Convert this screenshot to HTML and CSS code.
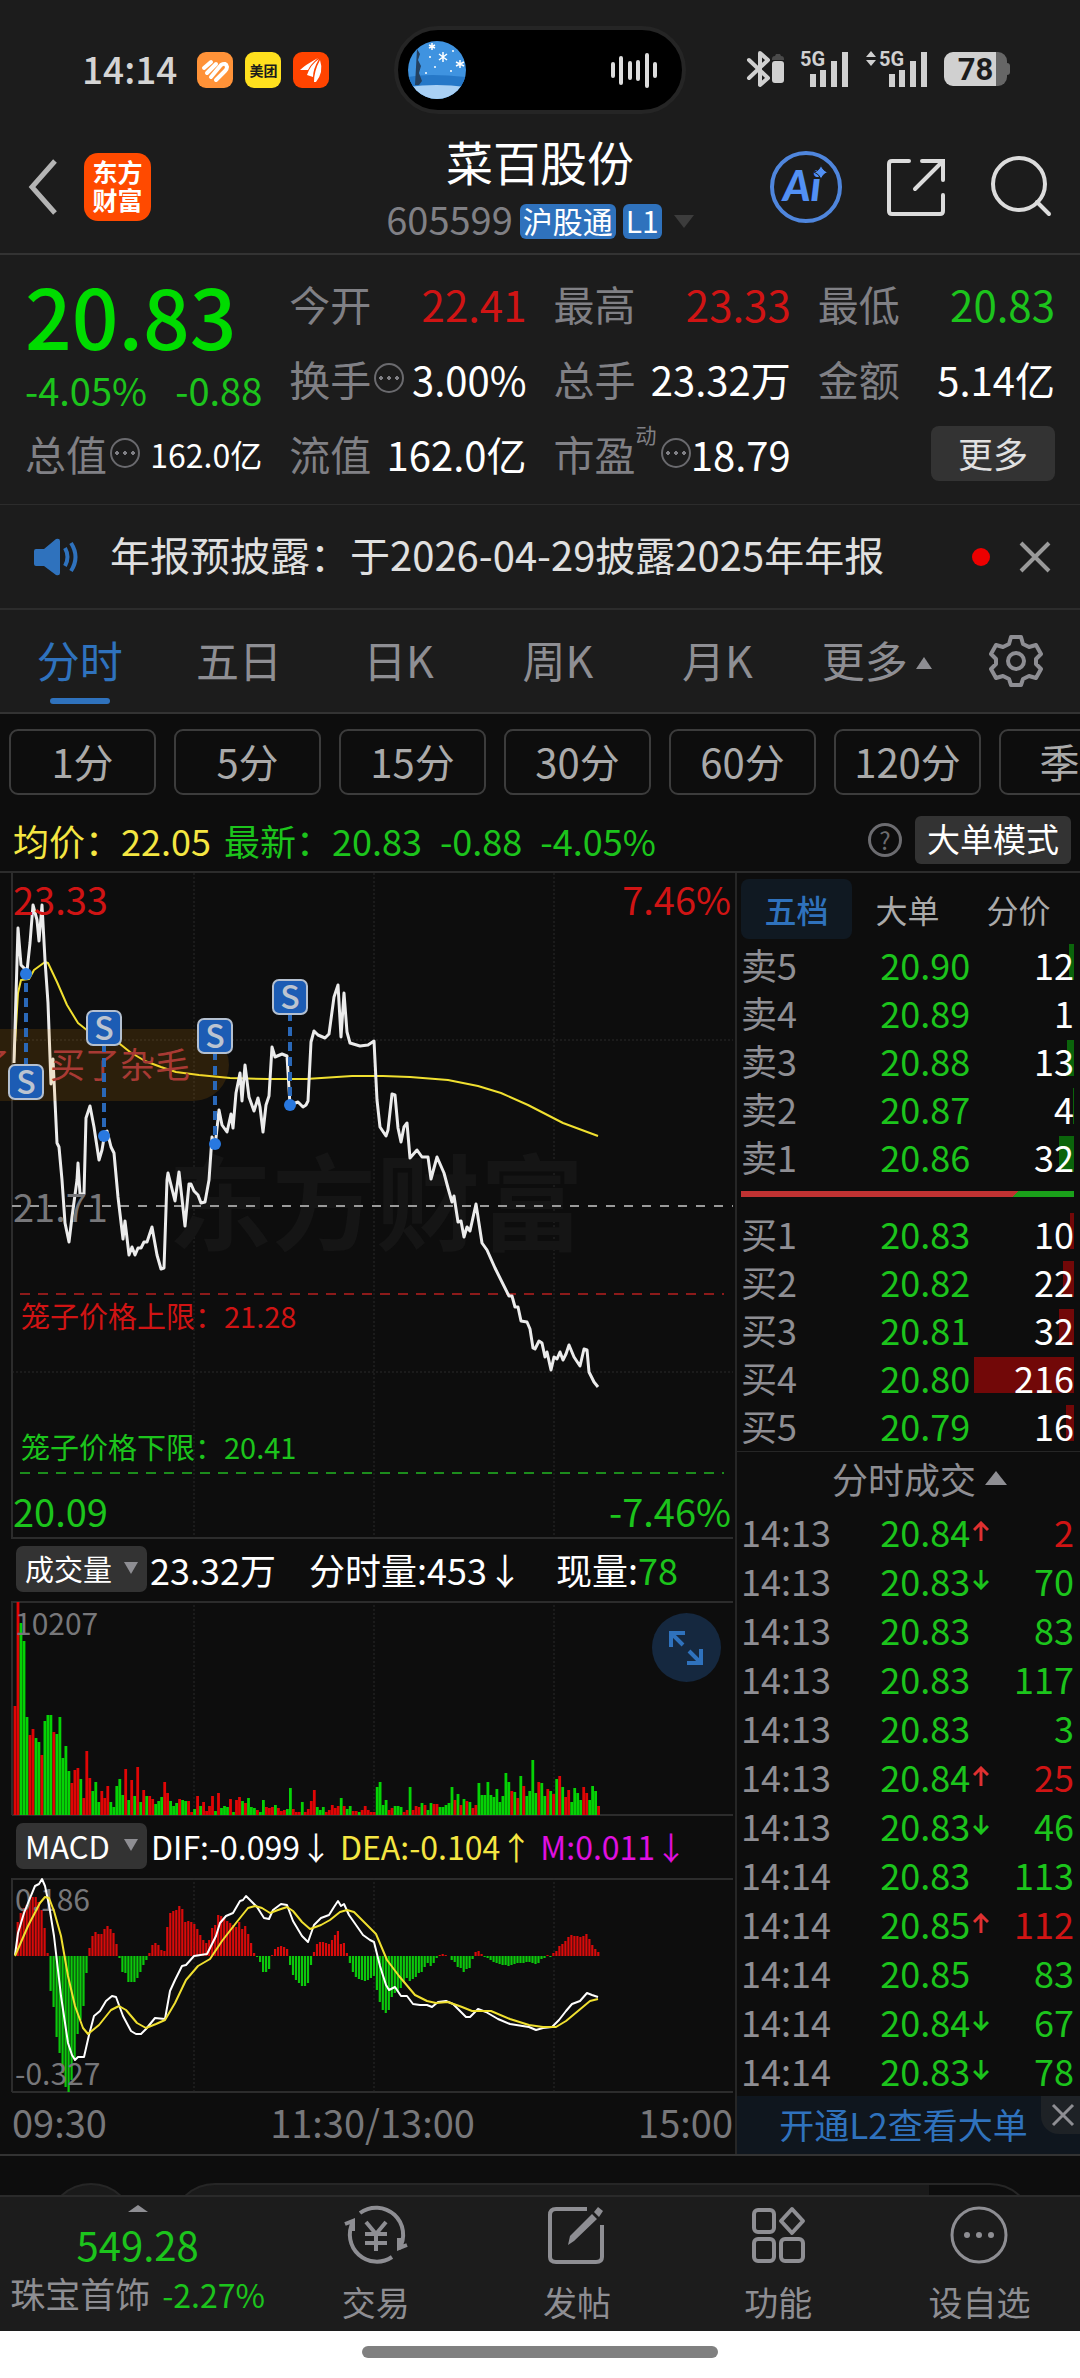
FILE: index.html
```
<!DOCTYPE html>
<html lang="zh-CN">

	<head>
		<meta charset="utf-8">
		<meta name="viewport" content="width=device-width">
		<title>菜百股份 605599</title>
		<link rel="stylesheet" href="styles.css">
	</head>

	<body>
		<!--状态栏-->
		<div class="status">
			<div class="status-left">
				<span class="clock">14:14</span>
				<svg class="app" viewBox="0 0 36 36"><rect width="36" height="36" rx="9" fill="#ff9238"/><path d="M7 16l7-6M10 21l9-9M14 25l10-12q5-3 6 2 0 2-2 4l-9 9" fill="none" stroke="#fff" stroke-width="4" stroke-linecap="round"/></svg>
				<span class="app meituan">美团</span>
				<svg class="app" viewBox="0 0 36 36"><rect width="36" height="36" rx="9" fill="#ff4400"/><path d="M7 18Q12 13 25 6 17 13 15 18zM14 23Q17 13 26 7 20 17 20 25zM21 30Q21 19 27 8 31 20 23 30z" fill="#fff"/></svg>
			</div>
			<div class="island">
				<svg class="cover" viewBox="0 0 58 58">
					<clipPath id="disc"><circle cx="29" cy="29" r="29"/></clipPath>
					<g clip-path="url(#disc)">
						<rect width="58" height="58" fill="#3f93e0"/>
						<path d="M0 36q20-4 58 0v10H0z" fill="#2678c8"/>
						<path d="M0 46q28-4 58 0v12H0z" fill="#a9d0f4"/>
						<path d="M9 8l3 5-2 6 3 6-2 7 3 8-3 4H7z" fill="#24405f"/>
						<g stroke="#fff" stroke-width="1.5"><path d="M24 2v7M21 4l6 3M27 4l-6 3M35 11v10M31 13l8 6M39 13l-8 6M52 19v8M48 21l8 4M56 21l-8 4"/></g>
						<g fill="#fff"><circle cx="22" cy="16" r="1"/><circle cx="27" cy="26" r="1"/><circle cx="45" cy="10" r="1"/><circle cx="43" cy="30" r="1"/><circle cx="18" cy="32" r="1"/></g>
					</g>
				</svg>
				<svg class="wave" viewBox="0 0 48 36"><path d="M3 12v12M11 6v25M20 11v15M28 10v17M37 3v31M45 12v12" stroke="#ddd" stroke-width="4" stroke-linecap="round"/></svg>
			</div>
			<div class="status-right">
				<svg class="bt" viewBox="0 0 38 40"><path d="M2 11l19 18-8 7V4l8 7L2 29" fill="none" stroke="#d0d0d0" stroke-width="4" stroke-linejoin="round" stroke-linecap="round"/><rect x="25" y="12" width="12" height="22" rx="3" fill="#d0d0d0"/><path d="M25 11v-1q0-3 3-3l1-2h4l1 2q3 0 3 3v1z" fill="#4a4a4a"/></svg>
				<svg class="signal" viewBox="0 0 50 40"><text x="0" y="17" class="g5">5G</text><path d="M13 25v13M23 21v17M34 12v26M45 3v35" stroke="#d0d0d0" stroke-width="6"/></svg>
				<svg class="signal wide" viewBox="0 0 64 40"><path d="M1 8l5-6 5 6zM1 11l5 6 5-6z" fill="#d0d0d0"/><text x="14" y="17" class="g5">5G</text><path d="M27 25v13M37 21v17M48 12v26M59 3v35" stroke="#d0d0d0" stroke-width="6"/></svg>
				<span class="battery">78</span>
			</div>
		</div>

		<!--标题栏-->
		<header class="header">
			<div class="header-left">
				<button class="icon-btn" aria-label="返回"><svg width="29" height="56" viewBox="0 0 29 56"><path d="M27 2L4 28l23 26" fill="none" stroke="#b4b4b4" stroke-width="5"/></svg></button>
				<a class="logo" href="#">东方<br>财富</a>
			</div>
			<div class="title">
				<h1>菜百股份</h1>
				<p><span class="code">605599</span><span class="tag">沪股通</span><span class="tag">L1</span><i class="down"></i></p>
			</div>
			<div class="header-right">
				<button class="icon-btn" aria-label="AI"><svg width="72" height="72" viewBox="0 0 72 72"><circle cx="36" cy="36" r="34" fill="none" stroke="#4f86dd" stroke-width="4"/><text class="ai" x="13" y="50">Ai</text><path d="M51 14q2 6 7 7-5 2-7 7-2-5-7-7 5-1 7-7z" fill="#5290f4" stroke="#1c1c1c" stroke-width="1"/></svg></button>
				<button class="icon-btn" aria-label="分享"><svg width="60" height="60" viewBox="0 0 60 60"><path d="M23 4H6q-3 0-3 3v47q0 3 3 3h48q3 0 3-3V38M36 4h21v19M56 5L29 32" fill="none" stroke="#dcdcdc" stroke-width="4" stroke-linecap="round"/></svg></button>
				<button class="icon-btn" aria-label="搜索"><svg width="62" height="62" viewBox="0 0 62 62"><circle cx="29" cy="28" r="26" fill="none" stroke="#dcdcdc" stroke-width="4"/><path d="M47 46l12 12" stroke="#dcdcdc" stroke-width="4" stroke-linecap="round"/></svg></button>
			</div>
		</header>

		<!--行情-->
		<section class="quote">
			<div class="now">
				<strong>20.83</strong>
				<p><span>-4.05%</span><span>-0.88</span></p>
			</div>
			<div class="item"><span class="name">今开</span><b class="big red">22.41</b></div>
			<div class="item"><span class="name">最高</span><b class="big red">23.33</b></div>
			<div class="item"><span class="name">最低</span><b class="big green">20.83</b></div>
			<div class="item"><span class="name">换手</span><i class="dots"></i><b>3.00%</b></div>
			<div class="item"><span class="name">总手</span><b>23.32万</b></div>
			<div class="item"><span class="name">金额</span><b>5.14亿</b></div>
			<div class="item"><span class="name">总值</span><i class="dots"></i><b class="small">162.0亿</b></div>
			<div class="item"><span class="name">流值</span><b>162.0亿</b></div>
			<div class="item"><span class="name">市盈</span><sup>动</sup><i class="dots"></i><b>18.79</b></div>
			<div class="item"><button class="more">更多</button></div>
		</section>

		<!--公告-->
		<section class="notice">
			<svg width="46" height="38" viewBox="0 0 46 38"><path d="M1 13q0-2 2-2h8L23 1q4-1 4 2v32q0 3-4 2L11 28H3q-2 0-2-2z" fill="#2f72bd"/><path d="M32 10q5 9 0 18M38 5q9 14 0 28" fill="none" stroke="#2f72bd" stroke-width="4"/></svg>
			<a href="#">年报预披露：于2026-04-29披露2025年年报</a>
			<i class="dot"></i>
			<button class="icon-btn" aria-label="关闭"><svg width="30" height="30" viewBox="0 0 30 30"><path d="M1 1l28 28M29 1L1 29" stroke="#9a9a9a" stroke-width="4"/></svg></button>
		</section>

		<!--周期-->
		<nav class="tabs">
			<a class="on" href="#">分时</a>
			<a href="#">五日</a>
			<a href="#">日K</a>
			<a href="#">周K</a>
			<a href="#">月K</a>
			<a href="#">更多<i class="up"></i></a>
			<button class="icon-btn" aria-label="设置"><svg width="52" height="52" viewBox="0 0 52 52"><path d="M21 2h10l2 7 6 3 7-2 5 9-5 5v5l5 5-5 9-7-2-6 3-2 6H21l-2-6-6-3-7 2-5-9 5-5v-5l-5-5 5-9 7 2 6-3z" fill="none" stroke="#8e8e93" stroke-width="4" stroke-linejoin="round"/><circle cx="26" cy="26" r="8" fill="none" stroke="#8e8e93" stroke-width="4"/></svg></button>
		</nav>
		<div class="minutes">
			<button>1分</button>
			<button>5分</button>
			<button>15分</button>
			<button>30分</button>
			<button>60分</button>
			<button>120分</button>
			<button>季K</button>
		</div>
		<div class="avg">
			<span class="yellow">均价：22.05</span>
			<span class="green last">最新：20.83</span>
			<span class="green">-0.88</span>
			<span class="green">-4.05%</span>
			<button class="help" aria-label="帮助">?</button>
			<button class="mode">大单模式</button>
		</div>

		<main class="board">
			<div class="charts">
				<svg class="chart" viewBox="0 0 735 666">
					<path class="frame" d="M12 0V665H733"/>
					<path class="grid" d="M194 0V665M374 0V665M554 0V665M12 167H733M12 499H733"/>
					<text class="mark" x="376" y="370" text-anchor="middle">东方财富</text>
					<path d="M12 333H733" stroke="#9a9a9a" stroke-width="2" stroke-dasharray="9 9"/>
					<path d="M20 421H724" stroke="#8c1a1a" stroke-width="2" stroke-dasharray="10 8"/>
					<path d="M20 600H724" stroke="#1c8c1c" stroke-width="2" stroke-dasharray="10 8"/>
					<polyline class="line avg-line" points="14,187 18,120 21,107 29,106 34,97 45,89 48,90 57,109 67,132 78,150 88,158 107,164 115,167 130,179 145,188 161,194 176,199 199,202 230,205 268,206 306,206 352,203 383,203 410,204 448,207 478,213 501,220 528,232 563,250 598,263"/>
					<polyline class="line price-line" points="14,190 18,55 21,92 27,98 30,70 33,32 37,47 39,68 42,32 45,87 48,130 51,211 53,186 57,270 59,274 62,307 65,350 69,369 72,344 77,307 78,290 80,321 84,321 86,245 90,233 94,254 99,287 102,277 105,259 107,258 111,274 114,280 118,324 123,366 125,348 129,382 132,374 135,382 138,375 141,375 144,369 147,369 152,354 157,382 161,396 164,395 167,307 168,300 175,328 179,299 185,353 189,311 191,311 194,318 198,322 201,330 205,329 209,307 212,264 215,274 219,237 222,252 227,259 231,241 233,255 236,220 240,200 242,228 245,192 249,224 254,238 258,225 260,234 263,259 266,232 269,223 272,174 275,184 282,181 287,183 290,232 298,229 303,234 306,232 308,228 311,169 314,158 318,162 325,165 329,161 334,124 338,112 341,164 344,120 347,159 350,170 360,173 368,172 374,168 377,227 380,254 386,263 388,257 392,221 395,222 398,255 401,269 404,254 407,250 410,285 417,277 422,284 428,284 431,306 437,284 444,300 448,315 452,329 454,323 458,349 461,348 464,364 467,354 470,358 476,331 482,370 487,377 495,395 509,423 512,423 515,434 518,434 521,448 527,449 530,456 533,475 535,476 539,468 542,470 545,484 547,479 551,497 554,484 557,486 560,479 563,487 566,481 569,472 574,484 580,493 584,476 587,477 589,499 594,509 598,514"/>
					<text class="edge red" x="13" y="42">23.33</text>
					<text class="edge red" x="731" y="42" text-anchor="end">7.46%</text>
					<text class="edge gray" x="13" y="349">21.71</text>
					<text class="edge green" x="13" y="654">20.09</text>
					<text class="edge green" x="731" y="654" text-anchor="end">-7.46%</text>
					<text class="cage red" x="21" y="455">笼子价格上限：21.28</text>
					<text class="cage green" x="21" y="586">笼子价格下限：20.41</text>
					<!--弹幕-->
					<path d="M0 156H193a36 36 0 0 1 0 72H0z" fill="#ff9a00" fill-opacity=".13"/>
					<text class="danmu" x="10" y="205" text-anchor="end">了</text>
					<text class="danmu" x="50" y="205">买了杂毛</text>
					<!--卖出点-->
					<g id="sells"></g>
				</svg>
				<div class="bar-title">
					<button class="pick">成交量<i class="down"></i></button>
					<span>23.32万</span>
					<span class="vol">分时量:453↓</span>
					<span class="vol">现量:<em class="green">78</em></span>
				</div>
				<div class="volume">
					<svg class="chart" viewBox="0 0 735 215">
						<path class="frame" d="M12 214V1H733M12 214H733"/>
						<path class="grid" d="M194 0V214M374 0V214M554 0V214"/>
						<g id="vol"></g>
						<text class="scale" x="15" y="34">10207</text>
					</svg>
					<button class="full" aria-label="全屏"><svg width="34" height="34" viewBox="0 0 34 34"><path d="M2 16V2h14M3 3l11 11M32 18v14H18M31 31L20 20" fill="none" stroke="#2f72bd" stroke-width="4"/></svg></button>
				</div>
				<div class="bar-title macd">
					<button class="pick">MACD<i class="down"></i></button>
					<span>DIF:-0.099↓</span>
					<span class="yellow">DEA:-0.104↑</span>
					<span class="purple">M:0.011↓</span>
				</div>
				<svg class="chart" viewBox="0 0 735 215">
					<path class="frame" d="M12 214V1H733M12 214H733"/>
					<path class="grid" d="M194 0V214M374 0V214M554 0V214"/>
					<g id="macd"></g>
					<text class="scale" x="15" y="33">0.186</text>
					<text class="scale" x="15" y="207">-0.327</text>
					<polyline class="line dif" points="15,77 18,55 24,35 28,25 35,8 39,6 42,1 45,8 49,27 54,58 61,118 68,165 72,177 75,182 78,179 84,179 89,157 94,138 100,133 106,123 112,118 116,119 123,138 131,153 136,156 141,156 146,151 155,140 165,141 170,113 175,102 182,88 186,87 194,78 207,76 211,68 216,58 220,45 226,38 233,35 240,23 243,22 246,18 250,22 257,29 264,40 269,41 273,32 281,26 287,27 293,43 302,58 308,64 314,47 321,40 329,37 334,29 338,23 341,28 344,26 349,37 356,47 363,57 370,62 374,64 380,88 386,107 389,112 395,109 401,118 407,118 413,126 420,127 427,127 432,129 438,124 446,123 453,126 460,133 466,139 470,139 478,131 486,134 498,141 510,146 529,149 536,152 543,150 552,149 559,142 566,133 572,126 580,123 587,115 592,117 598,119"/>
					<polyline class="line dea" points="15,78 28,48 40,25 45,19 49,20 54,33 61,58 68,98 75,128 83,150 88,156 99,147 111,132 119,128 126,132 137,145 146,150 156,146 165,142 175,125 186,102 198,88 210,81 222,63 236,45 248,30 255,28 262,30 270,35 278,32 287,29 293,33 302,44 310,51 321,47 330,42 340,34 347,32 354,34 363,43 376,56 387,82 399,98 415,117 427,123 436,125 448,124 462,129 472,133 491,133 510,141 529,147 543,149 556,149 566,143 578,133 590,123 598,121"/>
				</svg>
				<div class="axis"><span>09:30</span><span>11:30/13:00</span><span>15:00</span></div>
			</div>

			<!--盘口-->
			<aside class="side">
				<div class="side-tabs">
					<button class="on">五档</button>
					<button>大单</button>
					<button>分价</button>
				</div>
				<table class="five sell">
					<tr><th>卖5</th><td class="green">20.90</td><td class="num"><i style="width:5%"></i><span>12</span></td></tr>
					<tr><th>卖4</th><td class="green">20.89</td><td class="num"><span>1</span></td></tr>
					<tr><th>卖3</th><td class="green">20.88</td><td class="num"><i style="width:6%"></i><span>13</span></td></tr>
					<tr><th>卖2</th><td class="green">20.87</td><td class="num"><i style="width:1%"></i><span>4</span></td></tr>
					<tr><th>卖1</th><td class="green">20.86</td><td class="num"><i style="width:14%"></i><span>32</span></td></tr>
				</table>
				<div class="ratio"></div>
				<table class="five buy">
					<tr><th>买1</th><td class="green">20.83</td><td class="num"><i style="width:4%"></i><span>10</span></td></tr>
					<tr><th>买2</th><td class="green">20.82</td><td class="num"><i style="width:10%"></i><span>22</span></td></tr>
					<tr><th>买3</th><td class="green">20.81</td><td class="num"><i style="width:14%"></i><span>32</span></td></tr>
					<tr><th>买4</th><td class="green">20.80</td><td class="num"><i style="width:100%"></i><span>216</span></td></tr>
					<tr><th>买5</th><td class="green">20.79</td><td class="num"><i style="width:7%"></i><span>16</span></td></tr>
				</table>
				<button class="deal-title">分时成交<i class="up"></i></button>
				<table class="deal">
					<tr><th>14:13</th><td>20.84</td><td class="arrow rise"></td><td class="red">2</td></tr>
					<tr><th>14:13</th><td>20.83</td><td class="arrow fall"></td><td>70</td></tr>
					<tr><th>14:13</th><td>20.83</td><td class="arrow"></td><td>83</td></tr>
					<tr><th>14:13</th><td>20.83</td><td class="arrow"></td><td>117</td></tr>
					<tr><th>14:13</th><td>20.83</td><td class="arrow"></td><td>3</td></tr>
					<tr><th>14:13</th><td>20.84</td><td class="arrow rise"></td><td class="red">25</td></tr>
					<tr><th>14:13</th><td>20.83</td><td class="arrow fall"></td><td>46</td></tr>
					<tr><th>14:14</th><td>20.83</td><td class="arrow"></td><td>113</td></tr>
					<tr><th>14:14</th><td>20.85</td><td class="arrow rise"></td><td class="red">112</td></tr>
					<tr><th>14:14</th><td>20.85</td><td class="arrow"></td><td>83</td></tr>
					<tr><th>14:14</th><td>20.84</td><td class="arrow fall"></td><td>67</td></tr>
					<tr><th>14:14</th><td>20.83</td><td class="arrow fall"></td><td>78</td></tr>
				</table>
				<div class="l2">
					<a href="#">开通L2查看大单</a>
					<button class="l2-close" aria-label="关闭"><svg width="22" height="22" viewBox="0 0 22 22"><path d="M1 1l20 20M21 1L1 21" stroke="#8e8e93" stroke-width="3"/></svg></button>
				</div>
			</aside>
		</main>

		<div class="peek"><i class="peek-avatar"></i><i class="peek-box"></i></div>

		<!--底部-->
		<footer class="foot">
			<a class="sector" href="#">
				<i class="up"></i>
				<b>549.28</b>
				<span>珠宝首饰 <em>-2.27%</em></span>
			</a>
			<a href="#"><svg viewBox="0 0 66 60"><g fill="none" stroke="#8e8e93" stroke-width="4"><path d="M17 8A27 27 0 0 1 56 44M49 52A27 27 0 0 1 10 17M2 19l8-3v10M64 40l-8 3V33M23 17l10 12 10-12M33 29v17M22 29h22M22 38h22"/></g></svg>交易</a>
			<a href="#"><svg viewBox="0 0 66 60"><path d="M43 4H12q-6 0-6 6v42q0 5 6 5h40q6 0 6-5V20" fill="none" stroke="#8e8e93" stroke-width="4"/><path d="M24 40l2-9 22-22 5 5-23 22zM50 7l4-5 5 4-4 6z" fill="#8e8e93"/></svg>发帖</a>
			<a href="#"><svg viewBox="0 0 66 60"><g fill="none" stroke="#8e8e93" stroke-width="4"><rect x="9" y="5" width="20" height="22" rx="4"/><rect x="9" y="34" width="20" height="22" rx="4"/><rect x="36" y="34" width="22" height="22" rx="4"/><path d="M47 4l11 12-11 12-11-12z" stroke-linejoin="round"/></g></svg>功能</a>
			<a href="#"><svg viewBox="0 0 66 60"><circle cx="33" cy="30" r="27" fill="none" stroke="#8e8e93" stroke-width="3"/><g fill="#8e8e93"><circle cx="21" cy="30" r="3"/><circle cx="33" cy="30" r="3"/><circle cx="45" cy="30" r="3"/></g></svg>设自选</a>
		</footer>
		<div class="home"></div>
		<script src="chart.js"></script>
	</body>

</html>
```
FILE: styles.css
```
* {
	box-sizing: border-box;
}
body {
	margin: 0;
	background: #0d0d0d;
	color: #fff;
	font-family: "Noto Sans CJK SC", sans-serif;
	font-size: 36px;
	line-height: 1;
	overflow-x: hidden;
}
h1, p {
	margin: 0;
	font-weight: normal;
}
a {
	color: inherit;
	text-decoration: none;
}
i, em {
	font-style: normal;
}
b, th {
	font-weight: normal;
}
button {
	margin: 0;
	padding: 0;
	border: 0;
	background: none;
	color: inherit;
	font: inherit;
	white-space: nowrap;
}
svg {
	display: block;
	overflow: visible;
}
table {
	width: 100%;
	border-collapse: collapse;
	table-layout: fixed;
}
th, td {
	padding: 0 0 4px;
}
.icon-btn {
	display: flex;
	justify-content: center;
	align-items: center;
}
.red {
	color: #d01414;
	fill: #d01414;
}
.green {
	color: #1cc41c;
	fill: #1cc41c;
}
.gray {
	fill: #77777a;
}
.yellow {
	color: #f5e642;
}
.purple {
	color: #e010e0;
}
/*小三角*/
.up, .down {
	width: 0;
	height: 0;
	border: 10px solid transparent;
}
.up {
	border-top: 0;
	border-bottom-color: #8e8e93;
}
.down {
	border-bottom: 0;
	border-top-color: #8e8e93;
}

/*状态栏*/
.status {
	display: grid;
	grid-template-columns: 1fr 292px 1fr;
	align-items: center;
	height: 140px;
	background: #1c1c1c;
}
.status-left {
	display: flex;
	align-items: center;
	gap: 12px;
	padding-left: 82px;
}
.clock {
	margin-right: 8px;
	padding-bottom: 4px;
	color: #d4d4d4;
	font-size: 37px;
	font-weight: 500;
}
.app {
	width: 36px;
	height: 36px;
}
.meituan {
	border-radius: 9px;
	background: #ffe01e;
	color: #1c1c1c;
	font-size: 14px;
	font-weight: bold;
	line-height: 36px;
	text-align: center;
}
.island {
	display: flex;
	justify-content: space-between;
	align-items: center;
	height: 88px;
	padding: 0 24px 0 10px;
	border: 4px solid #252525;
	border-radius: 44px;
	background: #000;
}
.cover {
	width: 58px;
	height: 58px;
}
.wave {
	width: 48px;
	height: 36px;
}
.status-right {
	display: flex;
	align-items: center;
	justify-content: flex-end;
	gap: 15px;
	padding: 0 73px 2px 0;
}
.bt {
	width: 38px;
	height: 40px;
}
.signal {
	width: 50px;
	height: 40px;
}
.signal.wide {
	width: 64px;
}
.g5 {
	fill: #d0d0d0;
	font-family: Roboto, sans-serif;
	font-size: 20px;
	font-weight: bold;
}
.battery {
	position: relative;
	width: 63px;
	height: 34px;
	border-radius: 9px;
	background: linear-gradient(90deg, #d0d0d0 82%, #666 82%);
	color: #1c1c1c;
	font-family: Roboto, sans-serif;
	font-size: 31px;
	font-weight: bold;
	line-height: 36px;
	text-align: center;
}
.battery::after {
	content: "";
	position: absolute;
	left: 100%;
	top: 11px;
	width: 3px;
	height: 12px;
	border-radius: 0 3px 3px 0;
	background: #666;
}

/*标题栏*/
.header {
	display: grid;
	grid-template-columns: 1fr auto 1fr;
	height: 115px;
	border-bottom: 2px solid #333;
	background: #1c1c1c;
}
.header-left, .header-right {
	display: flex;
	align-items: center;
	height: 113px;
	padding: 0 28px 19px;
}
.header-left {
	gap: 27px;
}
.header-right {
	justify-content: flex-end;
	gap: 44px;
}
.logo {
	padding: 4px 0 8px;
	width: 67px;
	border-radius: 14px;
	background: #ff4a00;
	font-size: 25px;
	font-weight: bold;
	line-height: 28px;
	text-align: center;
}
.ai {
	fill: #5290f4;
	font-family: Lato, sans-serif;
	font-size: 42px;
	font-style: italic;
	font-weight: 900;
}
.title {
	text-align: center;
}
.title h1 {
	font-size: 47px;
	line-height: 42px;
}
.title p {
	display: flex;
	align-items: center;
	justify-content: center;
	gap: 7px;
	margin-top: 20px;
	height: 38px;
}
.code {
	padding-bottom: 4px;
	color: #808085;
	font-size: 38px;
}
.tag {
	padding: 0 3px 2px;
	border-radius: 6px;
	background: #2f72bd;
	font-size: 30px;
	line-height: 33px;
}
.title .down {
	margin-left: 5px;
	border-width: 13px 10px 0;
	border-top-color: #3c3c3c;
}

/*行情*/
.quote {
	display: grid;
	grid-template-columns: repeat(4, 1fr);
	grid-template-rows: repeat(3, 75px);
	column-gap: 27px;
	height: 250px;
	padding: 12px 25px 0;
	border-bottom: 1px solid #2c2c2c;
	background: #1c1c1c;
}
.now {
	grid-row: span 2;
	color: #1cc41c;
}
.now strong {
	display: block;
	margin-top: 4px;
	color: #00dc00;
	font-size: 82px;
	font-weight: 500;
	line-height: 88px;
}
.now p {
	display: flex;
	justify-content: space-between;
	margin-top: 12px;
	font-size: 38px;
	line-height: 38px;
}
.item {
	display: flex;
	align-items: center;
	padding-bottom: 2px;
	white-space: nowrap;
}
.name {
	color: #808085;
	font-size: 41px;
}
.item sup {
	align-self: flex-start;
	margin-top: 7px;
	color: #808085;
	font-size: 21px;
	line-height: 21px;
}
.item b {
	margin-left: auto;
	font-size: 40px;
}
.item b.big {
	font-size: 42px;
}
.item b.small {
	font-size: 32px;
}
/*圆圈里三个点*/
.dots {
	width: 30px;
	height: 30px;
	margin: 0 0 2px 3px;
	border: 2px solid #6a6a6e;
	border-radius: 50%;
	background: radial-gradient(circle, #808085 2px, transparent 2px) 1px 0 / 8px 26px;
}
.item sup + .dots {
	margin-left: 4px;
}
.more {
	width: 124px;
	height: 55px;
	margin-left: auto;
	padding-bottom: 3px;
	border-radius: 8px;
	background: #333;
	color: #e0e0e0;
	font-size: 35px;
}

/*公告*/
.notice {
	display: flex;
	align-items: center;
	height: 105px;
	padding: 0 30px 0 33px;
	border-bottom: 2px solid #2c2c2c;
	background: #1c1c1c;
	color: #e0e0e0;
	font-size: 40px;
}
.notice a {
	flex: 1;
	margin-left: 31px;
	padding-bottom: 5px;
	white-space: nowrap;
}
.dot {
	width: 18px;
	height: 18px;
	margin-right: 30px;
	border-radius: 50%;
	background: #ee0000;
}

/*周期*/
.tabs {
	display: grid;
	grid-template-columns: repeat(6, 8fr) 6fr;
	height: 104px;
	padding-right: 4px;
	border-bottom: 2px solid #333;
	background: #1c1c1c;
	color: #8e8e93;
	font-size: 43px;
	line-height: 98px;
	text-align: center;
}
.tabs a {
	position: relative;
}
.tabs .on {
	color: #2f72bd;
}
.tabs .on::after {
	content: "";
	position: absolute;
	left: 50%;
	bottom: 8px;
	width: 60px;
	height: 6px;
	margin-left: -30px;
	border-radius: 3px;
	background: #2f72bd;
}
.tabs .up {
	display: inline-block;
	margin: 0 0 9px 8px;
	border-width: 0 8px 12px;
}
.minutes {
	display: flex;
	gap: 18px;
	padding: 15px 0 15px 9px;
	overflow: hidden;
}
.minutes button {
	flex: none;
	width: 147px;
	height: 66px;
	padding-bottom: 2px;
	border: 2px solid #3c3c3c;
	border-radius: 9px;
	color: #aaa;
	font-size: 40px;
}
.avg {
	display: flex;
	align-items: center;
	gap: 18px;
	height: 63px;
	padding: 0 9px 2px 13px;
	border-bottom: 2px solid #2c2c2c;
	white-space: nowrap;
}
.avg .last {
	margin-left: -5px;
}
.help {
	width: 34px;
	height: 34px;
	margin-left: auto;
	margin-right: -5px;
	border: 3px solid #6c6c70;
	border-radius: 50%;
	color: #6c6c70;
	font-size: 24px;
}
.mode {
	width: 156px;
	height: 48px;
	padding-bottom: 2px;
	border-radius: 6px;
	background: #333;
	font-size: 33px;
}

/*分时图*/
.board {
	display: grid;
	grid-template-columns: 735fr 345fr;
	border-bottom: 2px solid #333;
}
.chart {
	width: 100%;
	height: auto;
}
.frame {
	fill: none;
	stroke: #2c2c2c;
	stroke-width: 2;
}
.grid {
	fill: none;
	stroke: #2a2a2a;
	stroke-dasharray: 2 2;
}
.mark {
	fill: #151515;
	font-size: 104px;
	font-weight: bold;
}
.line {
	fill: none;
	stroke-linejoin: round;
}
.price-line {
	stroke: #ececec;
	stroke-width: 3;
}
.avg-line, .dea {
	stroke: #f0e030;
	stroke-width: 2;
}
.dif {
	stroke: #fff;
	stroke-width: 2;
}
.edge {
	font-size: 38px;
}
.cage {
	font-size: 29px;
}
.scale {
	fill: #77777a;
	font-size: 30px;
}
.danmu {
	fill: #a83a34;
	font-size: 35px;
}
.sell-mark {
	fill: #bcc4d0;
	font-size: 32px;
	font-weight: 500;
}
.bar-title {
	display: flex;
	align-items: center;
	height: 62px;
	padding: 0 0 2px 16px;
	gap: 3px;
	white-space: nowrap;
}
.vol {
	margin-left: 30px;
}
.macd {
	gap: 8px;
	font-size: 32px;
}
.macd .pick {
	margin-right: -4px;
}
.pick {
	display: flex;
	align-items: center;
	justify-content: space-between;
	width: 131px;
	height: 46px;
	padding: 0 9px 2px;
	border-radius: 7px;
	background: #333;
	font-size: 29px;
}
.macd .pick {
	font-size: 31px;
}
.pick .down {
	border-width: 12px 7px 0;
}
.volume {
	position: relative;
}
.full {
	position: absolute;
	right: 14px;
	top: 12px;
	width: 69px;
	height: 69px;
	padding: 17px;
	border-radius: 50%;
	background: #15283f;
}
.axis {
	display: flex;
	justify-content: space-between;
	padding: 10px 2px 0 12px;
	color: #77777a;
	font-size: 38px;
	line-height: 38px;
}

/*盘口*/
.side {
	border-left: 2px solid #262626;
}
.side-tabs {
	display: grid;
	grid-template-columns: repeat(3, 1fr);
	padding: 6px 6px 3px 4px;
	color: #aaa;
	font-size: 32px;
}
.side-tabs button {
	height: 60px;
	border-radius: 8px;
}
.side-tabs .on {
	background: #101922;
	color: #2f72bd;
	font-weight: 500;
}
.five tr {
	height: 48px;
}
.side th {
	padding-left: 4px;
	color: #8e8e93;
	text-align: left;
}
.side td {
	text-align: right;
}
.five th {
	width: 34%;
}
.five .num {
	position: relative;
	width: 32%;
	padding-right: 6px;
}
.num i {
	position: absolute;
	right: 6px;
	top: 2px;
	height: 36px;
	max-width: 100px;
}
.num span {
	position: relative;
}
.sell i {
	background: #0b640b;
}
.buy i {
	background: #720808;
}
.ratio {
	height: 6px;
	margin: 9px 6px 14px 4px;
	background: linear-gradient(135deg, #c03232 82%, #1aa01a 82%);
}
.deal-title {
	display: flex;
	align-items: center;
	justify-content: center;
	gap: 9px;
	width: 100%;
	height: 57px;
	padding: 0 0 5px 22px;
	border-top: 1px solid #262626;
	color: #8e8e93;
}
.deal-title .up {
	border-width: 0 11px 14px;
}
.deal tr {
	height: 49px;
	color: #1cc41c;
}
.deal .red {
	color: #d01414;
}
.deal th {
	width: 34%;
}
.deal td {
	width: 34%;
}
.deal .arrow {
	width: 8%;
}
.deal td:last-child {
	width: 24%;
	padding-right: 6px;
}
.rise, .fall {
	background: 3px 13px / 16px 20px no-repeat;
}
.rise {
	background-image: url("data:image/svg+xml,%3Csvg xmlns='http://www.w3.org/2000/svg' viewBox='0 0 16 20'%3E%3Cpath d='M8 20V2M1 9l7-7 7 7' fill='none' stroke='%23e03030' stroke-width='3'/%3E%3C/svg%3E");
}
.fall {
	background-image: url("data:image/svg+xml,%3Csvg xmlns='http://www.w3.org/2000/svg' viewBox='0 0 16 20'%3E%3Cpath d='M8 0v18M1 11l7 7 7-7' fill='none' stroke='%231cc41c' stroke-width='3'/%3E%3C/svg%3E");
}
.l2 {
	position: relative;
	height: 58px;
	padding-right: 10px;
	background: #0f161e;
	color: #2f72bd;
	font-size: 35px;
	line-height: 56px;
	text-align: center;
}
.l2-close {
	position: absolute;
	right: 0;
	top: 0;
	width: 39px;
	height: 38px;
	padding-left: 11px;
	border-radius: 0 0 0 18px;
	background: #1e2226;
}

/*底部*/
.peek {
	display: flex;
	height: 39px;
	padding: 27px 46px 0 47px;
	overflow: hidden;
}
.peek-avatar, .peek-box {
	height: 88px;
	border: 2px solid #262626;
	border-radius: 44px;
	background: #1a1a1a;
}
.peek-avatar {
	width: 88px;
}
.peek-box {
	flex: 1;
	margin-left: 36px;
	background: linear-gradient(90deg, #1a1a1a 88%, #0d0d0d 88%);
}
.foot {
	display: grid;
	grid-template-columns: 275fr repeat(4, 201fr);
	height: 136px;
	border-top: 2px solid #2a2a2a;
	background: #1c1c1c;
	color: #8e8e93;
	font-size: 34px;
	line-height: 34px;
	text-align: center;
}
.foot a {
	display: flex;
	flex-direction: column;
	align-items: center;
	padding-top: 8px;
	white-space: nowrap;
}
.foot svg {
	width: 66px;
	height: 60px;
	margin-bottom: 20px;
}
.foot b {
	margin: 12px 0;
	color: #1cc41c;
	font-size: 40px;
	line-height: 40px;
}
.foot .up {
	border-width: 0 10px 7px;
}
.foot em {
	margin-left: 4px;
	color: #1cc41c;
	font-size: 32px;
}
.foot .sector span {
	font-size: 35px;
}
.home {
	height: 48px;
	padding-top: 15px;
	background: #fff;
}
.home::after {
	content: "";
	display: block;
	width: 33%;
	height: 12px;
	margin: 0 auto;
	border-radius: 6px;
	background: #808080;
}
```
FILE: chart.js
```
// 正数红柱，负数绿柱
var vol = [109, 213, -192, -174, -98, 80, 86, -77, -73, 60, -94, -100, -100, 83, -81, -98, -57, -69, -44, 32,
	45, 47, -36, 17, 64, 37, -24, -33, -13, 24, 17, 29, -13, -8, -29, -36, -20, 46, -15, 35,
	-19, 48, -13, 25, -19, 19, 16, -11, -14, -18, 33, 22, -14, -9, -12, 16, -15, -14, 14, 3,
	-6, 19, -9, 13, 4, 9, 19, -4, 22, -7, -9, -8, 16, -3, 15, 18, -14, 12, -17, -8,
	-7, 5, -3, -15, 8, 7, 8, -10, 7, 4, 5, -6, -27, 6, 3, 3, -13, 3, 6, 14,
	25, -8, -5, -8, 3, 5, 10, 7, 9, -17, 9, -6, -9, 4, 4, -3, 5, 9, 5, 3,
	3, -28, -33, -10, -15, 5, 7, -9, -9, -8, 3, 5, -28, 5, 9, 8, -12, 10, -5, -12,
	11, 11, -8, -8, -10, -12, -28, 15, -21, 10, -16, 14, -13, 7, 10, -32, -20, -20, -33, -20,
	-18, -26, -13, -19, -42, -33, 24, -23, 17, -39, 29, -19, -24, -55, -22, 33, -32, -19, 26, -24,
	21, -36, 39, -28, 18, 25, -13, -27, -22, -15, 28, 22, -15, -29, -24, 9];
var macd = [0, 34, 43, 48, 51, 58, 59, 59, 54, 46, 28, 3, -35, -51, -81, -97, -117, -131, -136, -124,
	-102, -78, -64, -50, -17, 8, 20, 24, 22, 22, 27, 30, 27, 23, 12, -2, -16, -17, -26, -26,
	-26, -22, -16, -9, -4, 3, 11, 13, 11, 6, 5, 29, 43, 45, 46, 50, 47, 34, 35, 34,
	32, 27, 21, 16, 13, 16, 28, 31, 41, 40, 38, 35, 33, 31, 29, 34, 27, 30, 22, 13,
	3, -1, -6, -16, -16, -13, 1, 7, 9, 10, 9, 7, -9, -19, -24, -27, -30, -30, -27, -9,
	4, 12, 14, 14, 13, 12, 16, 21, 25, 12, 13, 3, -7, -16, -21, -23, -24, -25, -24, -22,
	-20, -34, -46, -54, -57, -54, -41, -37, -36, -32, -26, -22, -25, -23, -21, -17, -16, -11, -7, -10,
	-7, -2, 1, 2, 1, 0, -4, -6, -11, -12, -16, -13, -12, -3, 4, 5, 2, -1, -2, -4,
	-6, -7, -8, -9, -9, -10, -9, -8, -7, -7, -7, -6, -6, -7, -8, -7, -3, -2, 1, -1,
	3, 5, 10, 12, 15, 19, 21, 20, 20, 19, 20, 22, 17, 11, 7, 4];
// 卖出点：x, 标记y, 价格点y
var sells = [[26, 209, 101], [104, 155, 263], [215, 163, 271], [290, 124, 232]];
var STEP = 2.993;

function bar(i, y, h, w, color) {
	return '<rect x="' + (13.6 + i * STEP).toFixed(1) + '" y="' + y + '" width="' + w + '" height="' + h + '" fill="' + color + '"/>';
}

var html = '';
for (var i = 0; i < vol.length; i++) {
	var h = Math.abs(vol[i]);
	html += bar(i, 214 - h, h, 2.8, vol[i] > 0 ? '#e00505' : '#05d205');
}
document.getElementById('vol').innerHTML = html;

html = '';
for (var i = 0; i < macd.length; i++) {
	var m = macd[i];
	html += bar(i, m > 0 ? 78 - m : 78, Math.abs(m), 2.2, m > 0 ? '#d80a0a' : '#0cc80c');
}
document.getElementById('macd').innerHTML = html;

html = '';
for (var i = 0; i < sells.length; i++) {
	var s = sells[i];
	html += '<path d="M' + s[0] + ' ' + s[1] + 'V' + s[2] + '" stroke="#2a68b8" stroke-width="4" stroke-dasharray="9 6"/>' +
		'<circle cx="' + s[0] + '" cy="' + s[2] + '" r="6" fill="#2878e0"/>' +
		'<rect x="' + (s[0] - 17) + '" y="' + (s[1] - 17) + '" width="34" height="34" rx="6" fill="#1c5cb4" stroke="#b4c0d0" stroke-width="2"/>' +
		'<text class="sell-mark" x="' + s[0] + '" y="' + (s[1] + 12) + '" text-anchor="middle">S</text>';
}
document.getElementById('sells').innerHTML = html;
```
